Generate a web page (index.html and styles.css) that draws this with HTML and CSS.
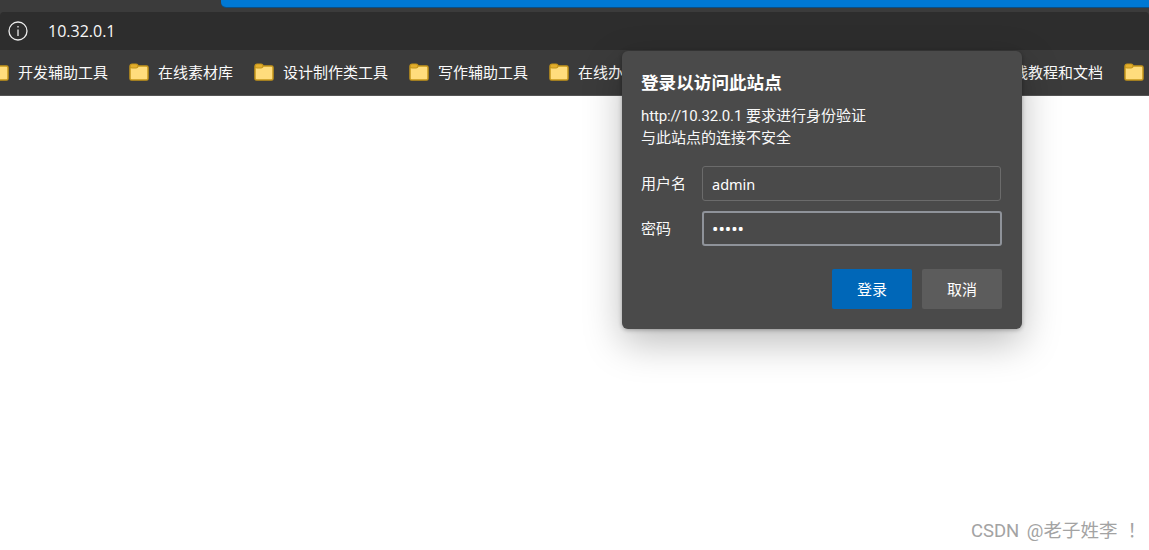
FILE: index.html
```html
<!DOCTYPE html>
<html lang="zh-CN">
<head>
<meta charset="utf-8">
<title>10.32.0.1</title>
<link rel="stylesheet" href="styles.css">
</head>
<body>
<header class="browser">
  <div class="tabstrip"><div class="tab-blue"></div></div>
  <div class="addressbar">
    <svg class="info-icon" width="20" height="20" viewBox="0 0 20 20" fill="none" stroke="#ececec" stroke-width="1.3">
      <circle cx="10" cy="10" r="9"/>
      <path d="M10 8.5V15"/>
      <path d="M10 5v1.6"/>
    </svg>
    <span class="url">10.32.0.1</span>
  </div>
  <nav class="bookmarks">
    <div class="bm"><svg class="folder" viewBox="0 0 20 18"><use href="#folder"/></svg><span>开发辅助工具</span></div>
    <div class="bm"><svg class="folder" viewBox="0 0 20 18"><use href="#folder"/></svg><span>在线素材库</span></div>
    <div class="bm"><svg class="folder" viewBox="0 0 20 18"><use href="#folder"/></svg><span>设计制作类工具</span></div>
    <div class="bm"><svg class="folder" viewBox="0 0 20 18"><use href="#folder"/></svg><span>写作辅助工具</span></div>
    <div class="bm"><svg class="folder" viewBox="0 0 20 18"><use href="#folder"/></svg><span>在线办公工具</span></div>
    <div class="bm"><svg class="folder" viewBox="0 0 20 18"><use href="#folder"/></svg><span>在线学习工具</span></div>
    <div class="bm"><svg class="folder" viewBox="0 0 20 18"><use href="#folder"/></svg><span>常用网站工具</span></div>
    <div class="bm"><svg class="folder" viewBox="0 0 20 18"><use href="#folder"/></svg><span>在线教程和文档</span></div>
    <div class="bm"><svg class="folder" viewBox="0 0 20 18"><use href="#folder"/></svg></div>
  </nav>
</header>

<svg class="defs" width="0" height="0">
  <defs>
    <g id="folder">
      <rect x="1" y="3" width="18" height="14" rx="1.5" fill="#ffdc7c" stroke="#c6961a" stroke-width="1.5"/>
      <rect x="1" y="1" width="8" height="4" rx="2" fill="#e3ae2c" stroke="#c6961a" stroke-width="1.2"/>
    </g>
  </defs>
</svg>

<main class="page"></main>

<form class="dialog">
  <h1 class="dialog-title">登录以访问此站点</h1>
  <p class="dialog-text"><span class="dialog-url">http://10.32.0.1</span> 要求进行身份验证<br>与此站点的连接不安全</p>
  <div class="field">
    <label class="field-label" for="user">用户名</label>
    <input class="field-input" id="user" type="text" value="admin">
  </div>
  <div class="field">
    <label class="field-label" for="pass">密码</label>
    <input class="field-input focused" id="pass" type="password" value="admin">
  </div>
  <div class="actions">
    <button class="btn primary" type="button">登录</button>
    <button class="btn" type="button">取消</button>
  </div>
</form>

<div class="watermark">CSDN @老子姓李<span class="watermark-bang">！</span></div>
</body>
</html>
```
FILE: styles.css
```css
* { box-sizing: border-box; }

html, body {
  margin: 0;
  height: 550px;
  overflow: hidden;
  background: #fff;
  font-family: "Noto Sans CJK SC", "Noto Sans", sans-serif;
}

.browser { background: #3b3b3b; }

.tabstrip {
  height: 12px;
  padding-left: 221px;
}

.tab-blue {
  height: 7px;
  background: #0078d4;
  border-bottom-left-radius: 5px;
  box-shadow: 0 1px 0 #0a4f87;
}

.addressbar {
  height: 38px;
  background: #2d2d2d;
  border-radius: 4px 4px 0 0;
  display: flex;
  align-items: center;
  padding-left: 8px;
  color: #fff;
}

.info-icon { flex: none; }

.url {
  margin-left: 20px;
  font-family: "Open Sans", "Noto Sans", sans-serif;
  font-size: 16px;
  color: #f8f8f8;
}

.bookmarks {
  height: 46px;
  border-bottom: 1px solid #555;
  display: flex;
  align-items: center;
  gap: 21px;
  margin-left: -11px;
  padding-bottom: 2px;
  overflow: hidden;
  color: #fafafa;
  font-size: 15px;
}

.bm {
  display: flex;
  align-items: center;
  gap: 9px;
  flex: none;
  white-space: nowrap;
}

.folder { width: 20px; height: 18px; flex: none; }

.defs { position: absolute; }

.dialog {
  position: absolute;
  left: 622px;
  top: 51px;
  width: 400px;
  height: 278px;
  margin: 0;
  padding: 20px 20px 20px 19px;
  background: #4a4a4a;
  border-radius: 6px;
  box-shadow: 0 14px 38px rgba(0, 0, 0, 0.26), 0 1px 4px rgba(0, 0, 0, 0.3);
  color: #f8f8f8;
  font-family: "Roboto", "Noto Sans CJK SC", sans-serif;
  display: flex;
  flex-direction: column;
}

.dialog-title {
  margin: 0;
  font-size: 17.6px;
  line-height: 24px;
  font-weight: 700;
  color: #fff;
}

.dialog-text {
  margin: 10px 0 0;
  font-size: 15px;
  line-height: 22px;
}

.dialog-url { letter-spacing: -0.13px; }

.field {
  display: flex;
  align-items: center;
  gap: 15px;
  margin-top: 10px;
}

.dialog-text + .field { margin-top: 17px; }

.field-label {
  width: 46px;
  font-size: 15px;
  line-height: 20px;
  flex: none;
}

.field-input {
  width: 299px;
  height: 35px;
  padding: 0 9px;
  background: #4a4a4a;
  border: 1px solid #6b6b6b;
  border-radius: 3px;
  color: #fff;
  font-family: "Noto Sans", sans-serif;
  font-size: 14.5px;
  line-height: 20px;
  outline: none;
}

.field-input.focused {
  width: 300px;
  border: 2px solid #8f939a;
  padding: 0 8px;
  font-size: 17px;
}

.actions {
  display: flex;
  justify-content: flex-end;
  gap: 10px;
  margin-top: auto;
}

.btn {
  width: 80px;
  height: 40px;
  border: 0;
  border-radius: 2px;
  background: #5c5c5c;
  color: #fff;
  font-family: "Noto Sans CJK SC", sans-serif;
  font-size: 15px;
  padding: 0 0 2px;
}

.btn.primary { background: #0067b8; }

.watermark {
  position: absolute;
  right: 3px;
  bottom: 6px;
  color: #a3a3a3;
  font-family: "Roboto", "Noto Sans CJK TC", sans-serif;
  font-size: 18.5px;
  word-spacing: 3px;
  line-height: 26px;
}

.watermark-bang { margin-left: 10px; }
```
